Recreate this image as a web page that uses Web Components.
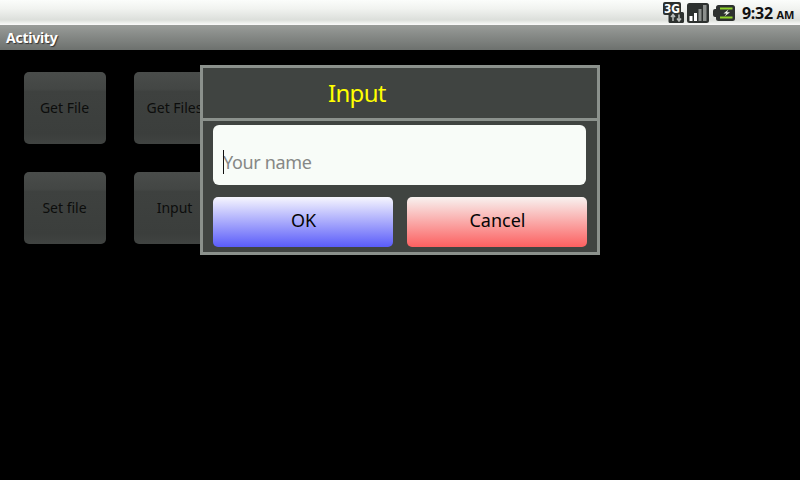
<!DOCTYPE html>
<html>
<head>
<meta charset="utf-8">
<style>
  html, body { margin: 0; padding: 0; width: 800px; height: 480px; overflow: hidden; background: #000; font-family: "Noto Sans", sans-serif; }
  body { display: flex; flex-direction: column; position: relative; }
</style>
</head>
<body>
<status-bar></status-bar>
<title-bar>Activity</title-bar>
<button-grid>
  <dim-button>Get File</dim-button>
  <dim-button>Get Files</dim-button>
  <dim-button>Set file</dim-button>
  <dim-button>Input</dim-button>
</button-grid>
<input-dialog heading="Input" placeholder="Your name"></input-dialog>
<script>
class StatusBar extends HTMLElement {
  constructor() {
    super();
    this.attachShadow({ mode: 'open' });
  }
  connectedCallback() {
    this.shadowRoot.innerHTML = `
      <style>
        :host {
          display: flex;
          justify-content: flex-end;
          align-items: center;
          flex: none;
          height: 25px;
          box-sizing: border-box;
          background: linear-gradient(#fbfdfb 0, #f1f3f0 35%, #dcdfdb 80%, #eff1ee 92%, #fafafa 100%);
          color: #111;
          font-family: "Noto Sans", sans-serif;
        }
        svg { display: block; flex: none; }
        .net { margin-right: 3px; margin-bottom: 1px; }
        .sig { margin-right: 4px; }
        .bat { margin-right: 7px; }
        .time { font-size: 16px; font-weight: 700; letter-spacing: -0.3px; margin-right: 6px; white-space: nowrap; }
        .time small { font-size: 11px; font-weight: 700; }
        text { font: 700 12px "DejaVu Sans", sans-serif; fill: #fff; }
      </style>
      <svg class="net" width="21" height="21" viewBox="0 0 21 21">
        <path d="M2 0h14a2 2 0 0 1 2 2v8h1.500a1.500 1.500 0 0 1 1.500 1.500v8a1.500 1.500 0 0 1-1.500 1.500H7a1.500 1.500 0 0 1-1.500-1.500V13H2a2 2 0 0 1-2-2V2a2 2 0 0 1 2-2z" fill="#2c302e"/>
        <text x="1" y="10.500" textLength="16" lengthAdjust="spacingAndGlyphs">3G</text>
        <path d="M10 19v-6M8 15l2-2.500 2 2.500" fill="none" stroke="#b9bdba" stroke-width="1.500"/>
        <path d="M16 12.500v6M14 16.500l2 2.500 2-2.500" fill="none" stroke="#b9bdba" stroke-width="1.500"/>
      </svg>
      <svg class="sig" width="22" height="20" viewBox="0 0 22 20">
        <rect x="0" y="0" width="22" height="20" rx="2.500" fill="#2d312f"/>
        <rect x="2.500" y="13" width="3" height="5" fill="#fff"/>
        <rect x="7" y="10" width="3" height="8" fill="#fff"/>
        <rect x="11.500" y="6" width="3" height="12" fill="#8c908d"/>
        <rect x="16" y="2" width="3.500" height="16" fill="#8c908d"/>
      </svg>
      <svg class="bat" width="22" height="16" viewBox="0 0 22 16">
        <path d="M2 4h1V2.500A2.500 2.500 0 0 1 5.500 0H19.500A2.500 2.500 0 0 1 22 2.500v11a2.500 2.500 0 0 1-2.500 2.500H5.500A2.500 2.500 0 0 1 3 13.500V12H2a2 2 0 0 1-2-2V6a2 2 0 0 1 2-2z" fill="#2d312f"/>
        <path d="M7 2.500h12.500v2H7zM7 11.500h12.500v2H7z" fill="#8fd42a"/>
        <path d="M15.500 4.500l-5 4h3l-2 3 5.500-4.200h-3z" fill="#f3f6ee"/>
      </svg>
      <span class="time">9:32 <small>AM</small></span>
    `;
  }
}

class TitleBar extends HTMLElement {
  constructor() {
    super();
    this.attachShadow({ mode: 'open' });
    this.shadowRoot.innerHTML = `
      <style>
        :host {
          display: flex;
          align-items: center;
          flex: none;
          height: 25px;
          padding-left: 6px;
          padding-bottom: 1px;
          box-sizing: border-box;
          background: linear-gradient(#999c99, #6d716e);
          color: #fff;
          font: 700 14px "Noto Sans", sans-serif;
          letter-spacing: -0.25px;
          text-shadow: 1px 1px 1px #333;
        }
      </style>
      <slot></slot>
    `;
  }
}

class ButtonGrid extends HTMLElement {
  constructor() {
    super();
    this.attachShadow({ mode: 'open' });
    this.shadowRoot.innerHTML = `
      <style>
        :host {
          display: grid;
          grid-template-columns: 82px 82px;
          grid-auto-rows: 72px;
          column-gap: 28px;
          row-gap: 28px;
          padding: 22px 0 0 24px;
        }
      </style>
      <slot></slot>
    `;
  }
}

class DimButton extends HTMLElement {
  constructor() {
    super();
    this.attachShadow({ mode: 'open' });
    this.shadowRoot.innerHTML = `
      <style>
        :host {
          display: flex;
          align-items: center;
          justify-content: center;
          box-sizing: border-box;
          padding: 0 1px 2px 0;
          border-radius: 5px;
          background: linear-gradient(#4a4d4b 0, #434644 24%, #3e413f 27%, #3b3e3c 85%, #404341 100%);
          color: #0c0d0c;
          font: 14px "Noto Sans", sans-serif;
          white-space: nowrap;
          overflow: hidden;
        }
      </style>
      <slot></slot>
    `;
  }
}

class InputDialog extends HTMLElement {
  constructor() {
    super();
    this.attachShadow({ mode: 'open' });
  }
  connectedCallback() {
    const heading = this.getAttribute('heading') || '';
    const placeholder = this.getAttribute('placeholder') || '';
    this.shadowRoot.innerHTML = `
      <style>
        :host {
          position: absolute;
          left: 200px;
          top: 65px;
          width: 400px;
          height: 190px;
          box-sizing: border-box;
          border: 3px solid #8b918c;
          background: #404441;
          display: flex;
          flex-direction: column;
          font-family: "Noto Sans", sans-serif;
        }
        .head {
          flex: none;
          height: 50px;
          box-sizing: border-box;
          display: flex;
          align-items: center;
          padding: 0 0 2px 125px;
          color: #ffff00;
          font-size: 24px;
          letter-spacing: -0.7px;
        }
        .rule { flex: none; height: 3px; background: #8b918c; }
        .body {
          flex: 1;
          display: flex;
          flex-direction: column;
          gap: 12px;
          padding: 4px 10px 5px 10px;
        }
        .field {
          flex: none;
          height: 60px;
          width: 373px;
          box-sizing: border-box;
          border-radius: 6px;
          background: #f8fcf8;
          color: #868886;
          font-size: 18px;
          letter-spacing: -0.35px;
          display: flex;
          align-items: center;
          padding: 13px 0 0 10px;
          position: relative;
        }
        .caret {
          position: absolute;
          left: 10px;
          top: 25px;
          width: 1px;
          height: 24px;
          background: #111;
        }
        .row { flex: none; display: flex; gap: 14px; }
        .btn {
          flex: none;
          width: 180px;
          height: 50px;
          box-sizing: border-box;
          padding: 0 0 5px 1px;
          border-radius: 5px;
          display: flex;
          align-items: center;
          justify-content: center;
          color: #050505;
          font-size: 18px;
        }
        .ok { background: linear-gradient(#f6f6fe, #5a5cfa); }
        .cancel { background: linear-gradient(#f8f2f0, #fc6060); }
      </style>
      <div class="head">${heading}</div>
      <div class="rule"></div>
      <div class="body">
        <div class="field"><span class="caret"></span>${placeholder}</div>
        <div class="row">
          <div class="btn ok">OK</div>
          <div class="btn cancel">Cancel</div>
        </div>
      </div>
    `;
  }
}

customElements.define('status-bar', StatusBar);
customElements.define('title-bar', TitleBar);
customElements.define('button-grid', ButtonGrid);
customElements.define('dim-button', DimButton);
customElements.define('input-dialog', InputDialog);
</script>
</body>
</html>
